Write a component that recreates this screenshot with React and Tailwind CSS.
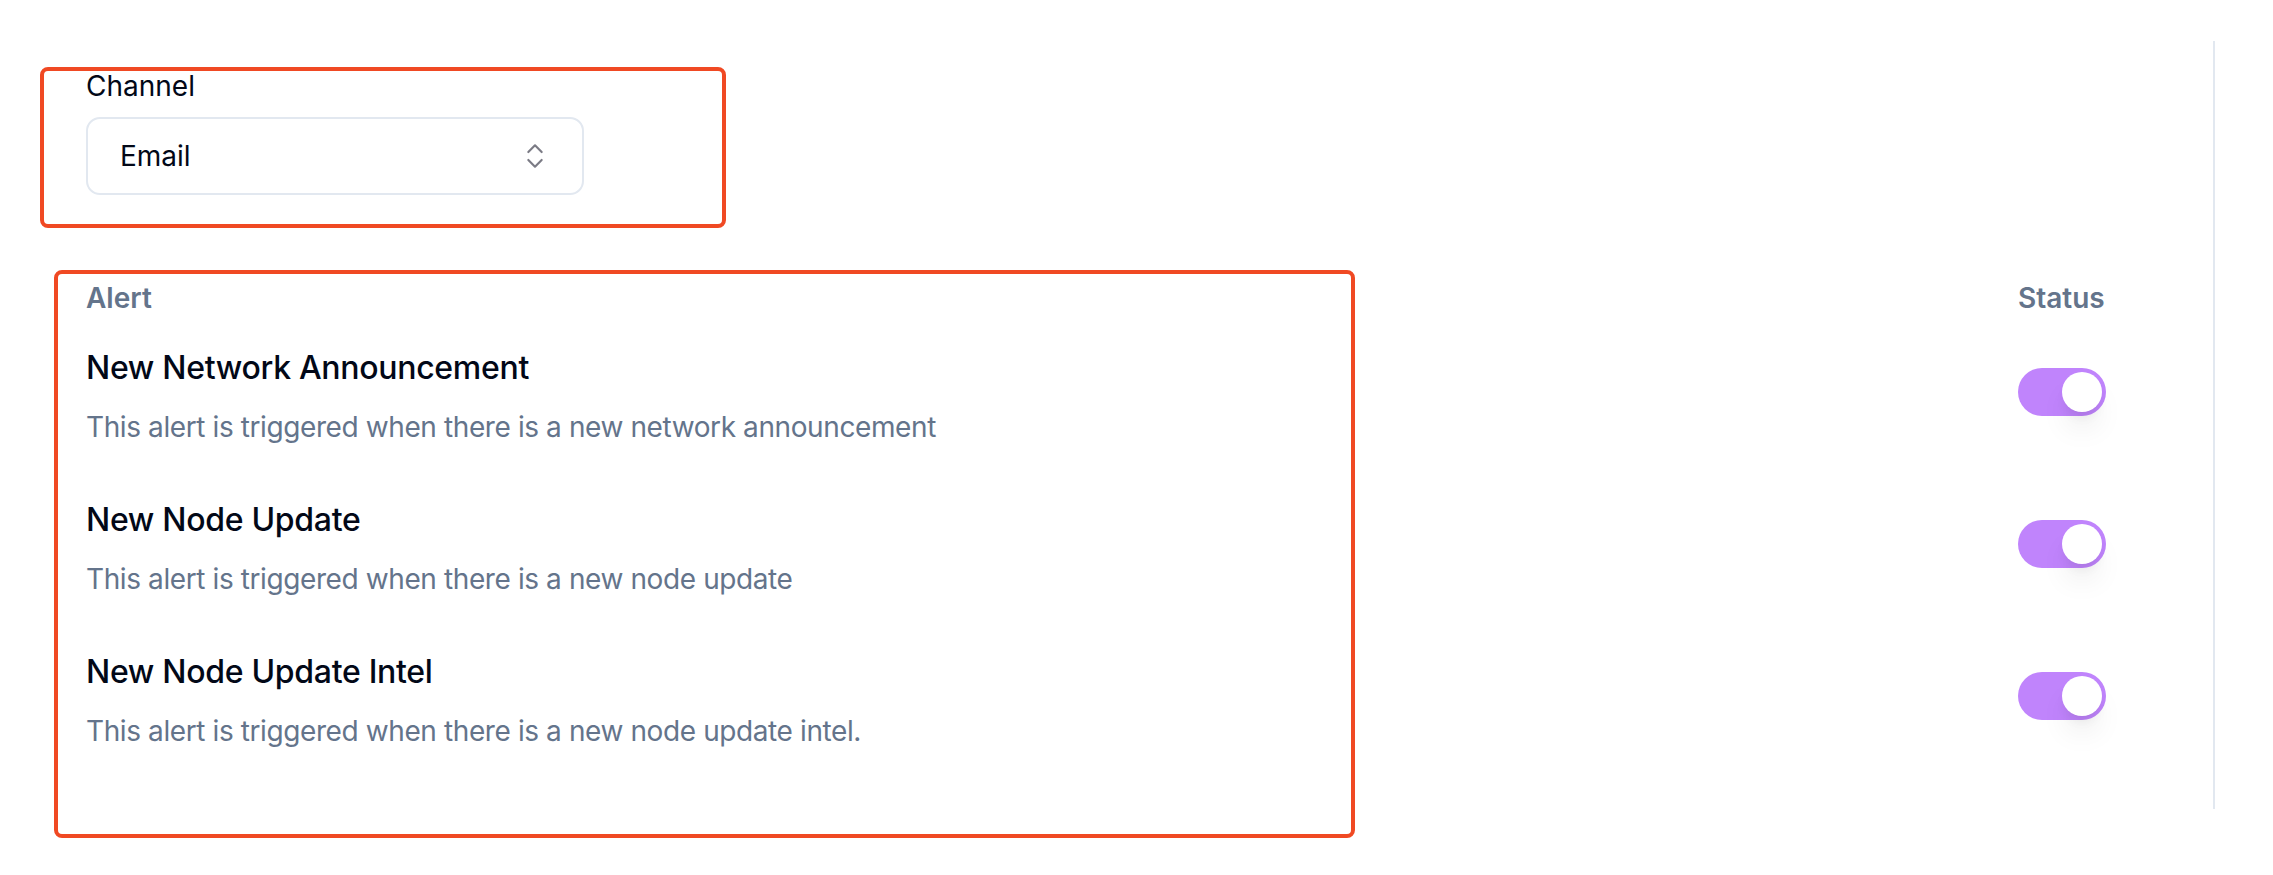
import { ChevronsUpDown } from "lucide-react";

const alerts = [
  {
    title: "New Network Announcement",
    desc: "This alert is triggered when there is a new network announcement",
  },
  {
    title: "New Node Update",
    desc: "This alert is triggered when there is a new node update",
  },
  {
    title: "New Node Update Intel",
    desc: "This alert is triggered when there is a new node update intel.",
  },
];

function Toggle() {
  return (
    <button className="mt-[24px] flex h-[48px] w-[88px] items-center justify-end self-start rounded-full bg-[#c084fc] p-[4px]">
      <span className="block h-[40px] w-[40px] rounded-full bg-white shadow-[0_20px_30px_-6px_rgba(0,0,0,0.1),0_8px_12px_-4px_rgba(0,0,0,0.08)]" />
    </button>
  );
}

export default function App() {
  return (
    <div className="relative min-h-screen bg-white pt-[41px] font-[family-name:Inter,sans-serif]">
      <div className="h-[768px] w-[2215px] border-r-2 border-[#e2e8f0] pl-[86px] pr-[107px] pt-[25px]">
        {/* Channel select */}
        <label className="block text-[28px] leading-[40px] text-[#020817]">Channel</label>
        <div className="mt-[11px] flex h-[78px] w-[498px] items-center justify-between rounded-[14px] border-2 border-[#e2e8f0] pl-[32px] pr-[31px]">
          <span className="text-[28px] leading-[40px] text-[#020817]">Email</span>
          <ChevronsUpDown size={32} strokeWidth={1.6} className="text-[#7b7b85]" />
        </div>

        {/* Alerts table */}
        <div className="mt-[83px] flex items-center justify-between">
          <span className="text-[28px] font-semibold leading-[40px] text-[#64748b]">Alert</span>
          <span className="w-[88px] text-[28px] font-semibold leading-[40px] text-[#64748b]">Status</span>
        </div>

        <div className="mt-[26px] flex flex-col gap-[49px]">
          {alerts.map((a) => (
            <div key={a.title} className="flex justify-between">
              <div>
                <div className="text-[32px] font-medium leading-[48px] tracking-[-0.3px] text-[#020817]">{a.title}</div>
                <div className="mt-[15px] text-[28px] leading-[40px] tracking-[-0.4px] text-[#64748b]">{a.desc}</div>
              </div>
              <Toggle />
            </div>
          ))}
        </div>
      </div>

      {/* annotation boxes */}
      <div className="pointer-events-none absolute left-[40px] top-[67px] h-[161px] w-[686px] rounded-[8px] border-4 border-[#f04923]" />
      <div className="pointer-events-none absolute left-[54px] top-[270px] h-[568px] w-[1301px] rounded-[8px] border-4 border-[#f04923]" />
    </div>
  );
}
